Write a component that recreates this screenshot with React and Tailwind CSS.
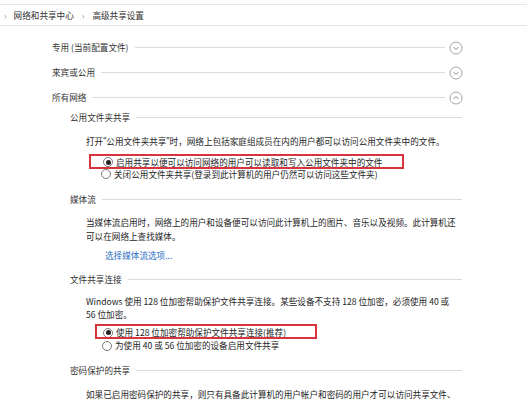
import React from "react";

const font = { fontFamily: '"Noto Sans CJK SC", "Noto Sans", sans-serif' };
const q = { fontFamily: '"Noto Sans", sans-serif' };

function CircleChevron({ up }) {
  return (
    <svg width="14" height="14" viewBox="0 0 14 14" className="shrink-0">
      <circle cx="7" cy="7" r="6" fill="none" stroke="#a6a6a6" strokeWidth="1" />
      {up ? (
        <path d="M4.5 8 L7 5.5 L9.5 8" fill="none" stroke="#8a8a8a" strokeWidth="1" />
      ) : (
        <path d="M4.5 6 L7 8.5 L9.5 6" fill="none" stroke="#8a8a8a" strokeWidth="1" />
      )}
    </svg>
  );
}

function Radio({ checked }) {
  return (
    <span className="w-[10px] h-[10px] rounded-full border border-[#7a7a7a] bg-white flex items-center justify-center shrink-0">
      {checked && <span className="w-[5px] h-[5px] rounded-full bg-[#222]" />}
    </span>
  );
}

function Level1({ text, up }) {
  return (
    <div className="h-[25px] flex items-center pl-[52px] pr-[64px]">
      <span className="text-[#333] whitespace-nowrap">{text}</span>
      <div className="flex-1 h-px bg-[#dcdcdc] ml-[6px] mr-[4px]" />
      <CircleChevron up={up} />
    </div>
  );
}

function Level2({ text, className }) {
  return (
    <div className={"h-[14px] flex items-center pl-[70px] pr-[65px] " + (className || "")}>
      <span className="text-[#333] whitespace-nowrap">{text}</span>
      <div className="flex-1 h-px bg-[#dcdcdc] ml-[6px]" />
    </div>
  );
}

export default function App() {
  return (
    <div className="w-[527px] h-[400px] bg-white overflow-hidden text-[8.6px] text-[#1e1e1e]" style={font}>
      <div className="mt-[4px] border-t border-[#e6e6e6]" />
      <div className="h-[20px] flex items-center pl-[4px] text-[#333]">
        <span className="text-[#888] mr-[7px]">›</span>
        <span>网络和共享中心</span>
        <span className="text-[#888] mx-[8px]">›</span>
        <span>高级共享设置</span>
      </div>
      <div className="border-t border-[#e6e6e6]" />

      <div className="pt-[9px]">
        <Level1 text="专用 (当前配置文件)" />
        <Level1 text="来宾或公用" />
        <Level1 text="所有网络" up />

        <Level2 text="公用文件夹共享" />
        <div className="mt-[10px] h-[14px] flex items-center pl-[86px] whitespace-nowrap">
          <span>打开</span><span style={q}>“</span><span>公用文件夹共享</span><span style={q}>”</span><span>时，网络上包括家庭组成员在内的用户都可以访问公用文件夹中的文件。</span>
        </div>
        <div className="relative mt-[8px] h-[12px] flex items-center pl-[103px] gap-[3px] whitespace-nowrap">
          <div className="absolute left-[89px] top-[-2px] w-[315px] h-[15px] border-2 border-[#d8343e]" />
          <Radio checked />
          <span>启用共享以便可以访问网络的用户可以读取和写入公用文件夹中的文件</span>
        </div>
        <div className="h-[12px] flex items-center pl-[101px] gap-[3px] whitespace-nowrap">
          <Radio />
          <span>关闭公用文件夹共享(登录到此计算机的用户仍然可以访问这些文件夹)</span>
        </div>

        <Level2 text="媒体流" className="mt-[12px]" />
        <div className="mt-[9px] pl-[86px] leading-[14px] whitespace-nowrap">
          当媒体流启用时，网络上的用户和设备便可以访问此计算机上的图片、音乐以及视频。此计算机还
          <br />
          可以在网络上查找媒体。
        </div>
        <div className="mt-[5px] h-[14px] flex items-center pl-[105px] text-[#2a6fc4]">选择媒体流选项...</div>

        <Level2 text="文件共享连接" className="mt-[10px]" />
        <div className="mt-[9px] pl-[86px] leading-[13px] whitespace-nowrap">
          Windows 使用 128 位加密帮助保护文件共享连接。某些设备不支持 128 位加密，必须使用 40 或
          <br />
          56 位加密。
        </div>
        <div className="relative mt-[5px] h-[13px] flex items-center pl-[103px] gap-[3px] whitespace-nowrap">
          <div className="absolute left-[95px] top-[-2px] w-[222px] h-[15px] border-2 border-[#d8343e]" />
          <Radio checked />
          <span>使用 128 位加密帮助保护文件共享连接(推荐)</span>
        </div>
        <div className="h-[13px] flex items-center pl-[102px] gap-[3px] whitespace-nowrap">
          <Radio />
          <span>为使用 40 或 56 位加密的设备启用文件共享</span>
        </div>

        <Level2 text="密码保护的共享" className="mt-[11px]" />
        <div className="mt-[10px] h-[14px] flex items-center pl-[86px] whitespace-nowrap">
          如果已启用密码保护的共享，则只有具备此计算机的用户帐户和密码的用户才可以访问共享文件、
        </div>
      </div>
    </div>
  );
}
